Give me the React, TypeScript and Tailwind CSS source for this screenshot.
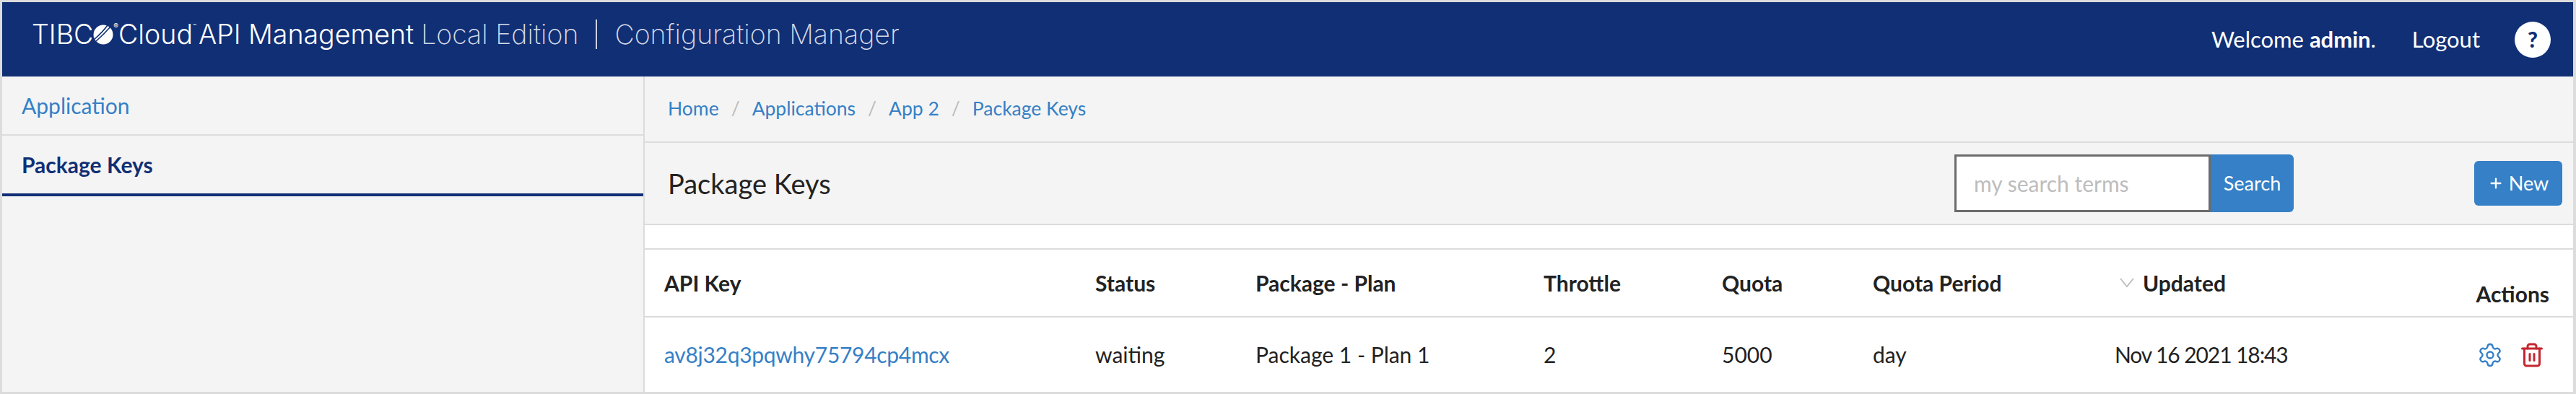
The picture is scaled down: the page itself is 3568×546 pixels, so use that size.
import { Settings, Trash2, Plus } from 'lucide-react';

const body = { fontFamily: 'Lato, "Open Sans", sans-serif' };

const columns = 'grid grid-cols-[597px_222px_399px_247px_209px_335px_1fr]';

function TibcoBall() {
  return (
    <svg viewBox="0 0 28 28" className="h-[28px] w-[28px] shrink-0">
      <circle cx="14" cy="14" r="13.5" fill="#fff" />
      <path d="M1 21 C8 15 15 8 20 1" stroke="#112f75" strokeWidth="1.6" fill="none" />
      <path d="M3 24 C10 18 18 10 24 3" stroke="#112f75" strokeWidth="1.6" fill="none" />
    </svg>
  );
}

export default function App() {
  return (
    <div className="flex h-[546px] w-[3568px] flex-col border-t-[3px] border-r-[4px] border-b-[3px] border-l-[3px] border-[#dcdcdc] bg-white" style={body}>
      {/* Header */}
      <header className="flex h-[103px] items-center bg-[#112f75] text-white">
        <div className="flex items-center pl-[41px] pb-[14px] text-[37.5px] leading-none" style={{ fontFamily: 'Inter, sans-serif' }}>
          <span className="font-light">TIBC</span>
          <TibcoBall />
          <span className="mb-[24px] text-[10px]">®</span>
          <span className="font-light">Cloud</span>
          <span className="mb-[24px] text-[8px]">™</span>
          <span className="ml-[3px] font-light">API Management</span>
          <span className="ml-[10px] font-extralight text-[#d5dbe8]">Local Edition</span>
          <span className="mx-[24px] h-[41px] w-[2px] bg-[#c9d1e3]" />
          <span className="font-extralight text-[#d5dbe8]">Configuration Manager</span>
        </div>
        <div className="ml-auto flex items-center pr-[31px] text-[31px]">
          <span>Welcome <b>admin</b>.</span>
          <span className="ml-[50px]">Logout</span>
          <span className="ml-[48px] flex h-[50px] w-[50px] items-center justify-center rounded-full bg-white text-[30px] font-black text-[#112f75]">?</span>
        </div>
      </header>

      <div className="flex min-h-0 flex-1">
        {/* Sidebar */}
        <aside className="w-[890px] shrink-0 border-r-2 border-[#dcdcdc] bg-[#f4f4f4] text-[30px]">
          <div className="flex h-[82px] items-center border-b-2 border-[#dcdcdc] pl-[27px] text-[#3580c6]">Application</div>
          <div className="flex h-[84px] items-center border-b-4 border-[#112f75] pl-[27px] font-bold text-[#112f75]">Package Keys</div>
        </aside>

        {/* Main */}
        <main className="flex min-w-0 flex-1 flex-col">
          <nav className="flex h-[92px] items-center border-b-2 border-[#dcdcdc] bg-[#f4f4f4] pl-[32px] text-[26.5px] text-[#3580c6]">
            <span>Home</span>
            <span className="mx-[17px] text-[#bbb]">/</span>
            <span>Applications</span>
            <span className="mx-[17px] text-[#bbb]">/</span>
            <span>App 2</span>
            <span className="mx-[17px] text-[#bbb]">/</span>
            <span>Package Keys</span>
          </nav>

          <div className="flex h-[114px] items-center border-b-2 border-[#dcdcdc] bg-[#f4f4f4] pl-[32px] pr-[15px]">
            <h1 className="text-[38px] text-[#222]">Package Keys</h1>
            <div className="ml-auto flex h-[80px]">
              <div className="flex w-[355px] items-center border-[3px] border-[#6b6b6b] bg-white pl-[24px] text-[30px] text-[#bdbdbd]">my search terms</div>
              <button className="w-[115px] rounded-r-[6px] bg-[#3580c6] text-[27px] text-white">Search</button>
            </div>
            <button className="ml-[250px] flex h-[62px] w-[122px] items-center justify-center gap-[7px] rounded-[6px] bg-[#3580c6] text-[27px] text-white">
              <Plus size={22} strokeWidth={2.5} />
              New
            </button>
          </div>

          <div className="h-[34px] border-b-2 border-[#dcdcdc]" />

          <div className={`${columns} h-[94px] items-center border-b-2 border-[#dcdcdc] pl-[27px] text-[30px] font-bold text-[#222]`}>
            <span>API Key</span>
            <span>Status</span>
            <span>Package - Plan</span>
            <span>Throttle</span>
            <span>Quota</span>
            <span>Quota Period</span>
            <div className="flex items-center justify-between">
              <span className="flex items-center gap-[12px] pl-[7px]">
                <svg viewBox="0 0 20 14" className="h-[14px] w-[20px] text-[#bbb]">
                  <path d="M1 1 L10 12 L19 1" stroke="currentColor" strokeWidth="1.8" fill="none" />
                </svg>
                Updated
              </span>
              <span className="mt-[30px] pr-[33px]">Actions</span>
            </div>
          </div>

          <div className={`${columns} flex-1 items-center pl-[27px] text-[30px] text-[#222]`}>
            <a className="tracking-[-0.3px] text-[#3580c6]">av8j32q3pqwhy75794cp4mcx</a>
            <span>waiting</span>
            <span>Package 1 - Plan 1</span>
            <span>2</span>
            <span>5000</span>
            <span>day</span>
            <div className="flex items-center justify-between">
              <span className="tracking-[-1.1px]">Nov 16 2021 18:43</span>
              <span className="flex items-center gap-[22px] pr-[39px]">
                <Settings size={36} strokeWidth={1.6} className="text-[#3580c6]" />
                <Trash2 size={36} strokeWidth={2} className="text-[#c4262e]" />
              </span>
            </div>
          </div>
        </main>
      </div>
    </div>
  );
}
